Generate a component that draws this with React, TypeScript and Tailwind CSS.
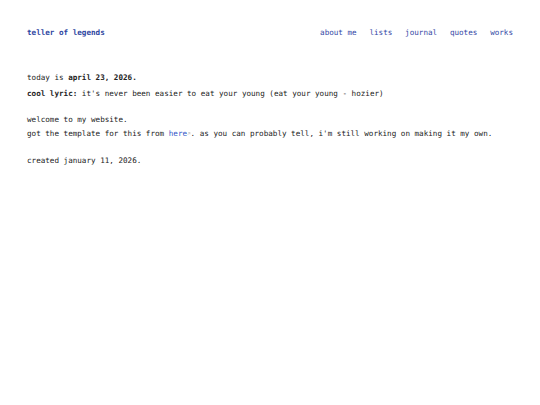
export default function App() {
  return (
    <div
      className="min-h-[405px] w-full bg-white px-[27px] pt-[26px] text-[7.6px] text-[#222]"
      style={{ fontFamily: '"DejaVu Sans Mono", monospace' }}
    >
      {/* header */}
      <header className="flex h-[14px] items-center justify-between leading-[14px]">
        <a className="font-bold text-[#2c44a0]">teller of legends</a>
        <nav className="flex gap-[12.8px] text-[#3347a5]">
          <a>about me</a>
          <a>lists</a>
          <a>journal</a>
          <a>quotes</a>
          <a>works</a>
        </nav>
      </header>

      <main className="mt-[30px]">
        <div className="leading-[16px]">
          <p>
            today is <b>april 23, 2026.</b>
          </p>
          <p>
            <b>cool lyric:</b> it's never been easier to eat your young (eat your young - hozier)
          </p>
        </div>

        <div className="mt-[11px] leading-[14px]">
          <p>welcome to my website.</p>
          <p>
            got the template for this from{' '}
            <a className="text-[#3456c8]">here</a>
            <svg viewBox="0 0 6 6" className="inline-block h-[3.5px] w-[3.5px] align-middle" fill="none" stroke="#b5b5b5" strokeWidth="1">
              <path d="M1 5 L5 1 M2 1 H5 V4" />
            </svg>
            . as you can probably tell, i'm still working on making it my own.
          </p>
        </div>

        <p className="mt-[13px] leading-[14px]">created january 11, 2026.</p>
      </main>
    </div>
  );
}
